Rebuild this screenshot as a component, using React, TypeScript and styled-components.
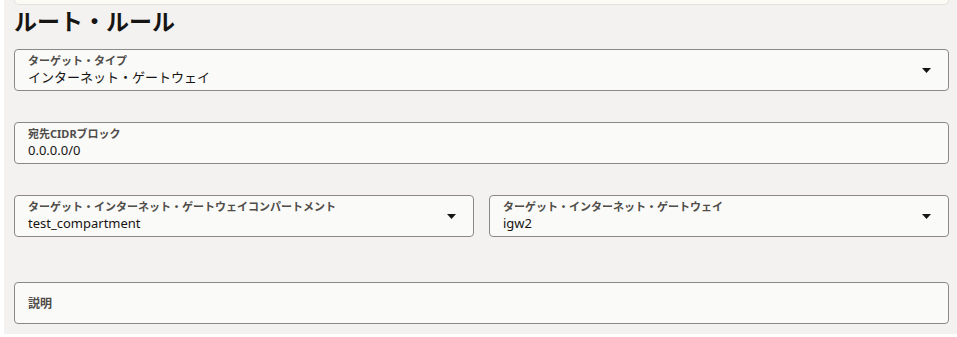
import React from "react";
import styled, { createGlobalStyle } from "styled-components";

const GlobalStyle = createGlobalStyle`
    html, body {
        margin: 0;
        padding: 0;
        background: #ffffff;
    }
    body {
        font-family: "Noto Sans", "Noto Sans CJK JP", sans-serif;
        color: #161513;
    }
`;

const Page = styled.div`
    width: 957px;
    padding-left: 4px;
    box-sizing: border-box;
`;

const Panel = styled.div`
    background: #f3f2f0;
    padding: 0 8px 10px 10px;
    display: flex;
    flex-direction: column;
`;

const PrevCardEdge = styled.div`
    height: 5px;
    background: #fcfaf4;
    border: 1px solid #e4e1db;
    border-top: none;
    border-radius: 0 0 6px 6px;
    box-sizing: border-box;
`;

const Title = styled.h2`
    margin: 0;
    height: 44px;
    font-size: 23px;
    line-height: 31px;
    font-weight: 700;
    color: #161513;
    font-family: "Noto Sans CJK JP", sans-serif;
`;

const Row = styled.div<{ gap?: number }>`
    display: flex;
    gap: 15px;
    margin-bottom: ${({ gap }) => gap ?? 0}px;
`;

const Field = styled.div`
    flex: 1;
    height: 42px;
    box-sizing: border-box;
    border: 1px solid #8a8987;
    border-radius: 4px;
    background: #fafaf8;
    padding: 0 14px 0 13px;
    display: flex;
    align-items: center;
    justify-content: space-between;
`;

const FieldText = styled.div`
    display: flex;
    flex-direction: column;
`;

const Label = styled.span`
    font-size: 11px;
    line-height: 14px;
    font-weight: 700;
    color: #4f4c49;
`;

const Value = styled.span`
    font-size: 13px;
    line-height: 18px;
    color: #161513;
`;

const Placeholder = styled.span`
    font-size: 12px;
    font-weight: 700;
    color: #4f4c49;
`;

const Caret = () => (
    <svg width="9" height="5" viewBox="0 0 9 5" style={{ marginRight: 3 }}>
        <path d="M0 0 H9 L4.5 5 Z" fill="#161513" />
    </svg>
);

type SelectProps = { label: string; value: string; select?: boolean };

function InputField({ label, value, select }: SelectProps) {
    return (
        <Field>
            <FieldText>
                <Label>{label}</Label>
                <Value>{value}</Value>
            </FieldText>
            {select && <Caret />}
        </Field>
    );
}

export default function App() {
    return (
        <>
            <GlobalStyle />
            <Page>
                <Panel>
                    <PrevCardEdge />
                    <Title>ルート・ルール</Title>
                    <Row gap={31}>
                        <InputField label="ターゲット・タイプ" value="インターネット・ゲートウェイ" select />
                    </Row>
                    <Row gap={31}>
                        <InputField label="宛先CIDRブロック" value="0.0.0.0/0" />
                    </Row>
                    <Row gap={45}>
                        <InputField label="ターゲット・インターネット・ゲートウェイコンパートメント" value="test_compartment" select />
                        <InputField label="ターゲット・インターネット・ゲートウェイ" value="igw2" select />
                    </Row>
                    <Row>
                        <Field>
                            <Placeholder>説明</Placeholder>
                        </Field>
                    </Row>
                </Panel>
            </Page>
        </>
    );
}
